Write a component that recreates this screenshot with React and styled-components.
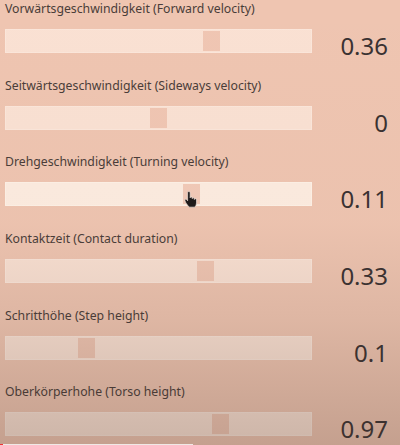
// Node modules.
import * as React from "react"
import styled, { createGlobalStyle } from "styled-components"

const GlobalStyle = createGlobalStyle`
  html,
  body {
    margin: 0;
    padding: 0;
  }

  body {
    font-family: "Noto Sans", "Open Sans", sans-serif;
    overflow: hidden;
  }
`

const Page = styled.div`
  background: #efc5b1;
  box-sizing: border-box;
  display: flex;
  flex-direction: column;
  height: 445px;
  overflow: hidden;
  padding: 1px 12px 0 5px;
  position: relative;
  width: 400px;
`

const Shade = styled.div`
  background: linear-gradient(
    to bottom,
    rgba(70, 50, 40, 0) 0%,
    rgba(70, 50, 40, 0.02) 50%,
    rgba(70, 50, 40, 0.1) 72%,
    rgba(70, 50, 40, 0.25) 100%
  );
  inset: 0;
  pointer-events: none;
  position: absolute;
`

const Row = styled.div`
  align-items: start;
  display: grid;
  flex: 0 0 76.67px;
  grid-template-columns: 307px 1fr;
  grid-template-rows: 16px 24px;
  row-gap: 12px;
`

const Label = styled.div`
  color: #4a3d39;
  font-size: 12.25px;
  grid-column: 1 / 3;
  line-height: 16px;
  white-space: nowrap;
`

const Track = styled.div`
  background: ${(p) => (p.$hover ? "#fdece0" : "#fae1d3")};
  box-shadow: inset 0 0 0 1px ${(p) => (p.$hover ? "#fef1e6" : "#fbe6da")};
  height: 24px;
  position: relative;
`

const Thumb = styled.div`
  background: ${(p) => (p.$hover ? "#f2cab8" : "#f0c6b3")};
  bottom: 2px;
  position: absolute;
  top: 2px;
  width: 17px;
`

const Value = styled.div`
  color: #3a3232;
  font-size: 24px;
  justify-self: end;
  line-height: 24px;
  margin-top: 5px;
`

const Cursor = styled.svg`
  height: 17px;
  left: 184px;
  pointer-events: none;
  position: absolute;
  top: 191px;
  width: 14px;
`

const Progress = styled.div`
  background: linear-gradient(to right, #e33 0 3px, #efe9e6 3px);
  bottom: 0;
  height: 1px;
  left: 0;
  position: absolute;
  width: 193px;
`

const sliders = [
  { label: "Vorwärtsgeschwindigkeit (Forward velocity)", value: "0.36", pos: 0.683 },
  { label: "Seitwärtsgeschwindigkeit (Sideways velocity)", value: "0", pos: 0.5 },
  { label: "Drehgeschwindigkeit (Turning velocity)", value: "0.11", pos: 0.614, hover: true },
  { label: "Kontaktzeit (Contact duration)", value: "0.33", pos: 0.662 },
  { label: "Schritthöhe (Step height)", value: "0.1", pos: 0.252 },
  { label: "Oberkörperhohe (Torso height)", value: "0.97", pos: 0.714 },
]

const App = () => (
  <Page>
    <GlobalStyle />
    {sliders.map((s) => (
      <Row key={s.label}>
        <Label>{s.label}</Label>
        <Track $hover={s.hover}>
          <Thumb $hover={s.hover} style={{ left: `${s.pos * 290}px` }} />
        </Track>
        <Value>{s.value}</Value>
      </Row>
    ))}

    {/* Mouse pointer over the turning slider */}
    <Cursor viewBox="0 0 16 20">
      <path
        d="M4 2 Q4 0.6 5.5 0.6 Q7 0.6 7 2 V8 Q7 7 8.3 7 Q9.5 7 9.5 8.3 V9 Q9.5 8 10.8 8 Q12 8 12 9.3 V10 Q12 9 13.2 9 Q14.5 9 14.5 10.5 V14 Q14.5 17 12.5 19 H6 Q4 17 2 14 L0.9 11.6 Q0.4 10.3 1.5 9.8 Q2.6 9.4 3.3 10.5 L4 11.5 Z"
        fill="#1e1a1a"
        stroke="#f3e6df"
        strokeWidth="0.8"
        strokeLinejoin="round"
      />
    </Cursor>

    <Shade />
    <Progress />
  </Page>
)

export default App
